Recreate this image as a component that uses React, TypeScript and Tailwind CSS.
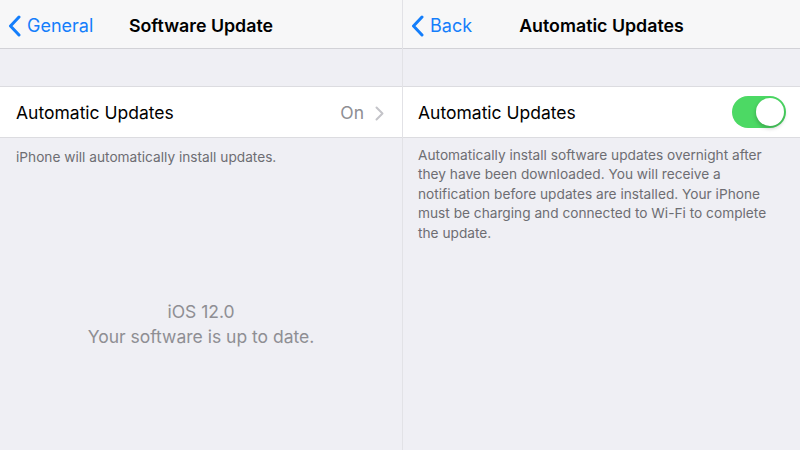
import React from "react";

function BackChevron() {
  return (
    <svg width="13" height="22" viewBox="0 0 13 22" fill="none" className="shrink-0">
      <path d="M11 2 L2.5 11 L11 20" stroke="#147efb" strokeWidth="3" strokeLinecap="round" strokeLinejoin="round" />
    </svg>
  );
}

function NavBar({ back, title }: { back: string; title: string }) {
  return (
    <div className="relative flex h-[49px] items-center border-b border-[#d2d2d7] bg-[#f7f7f8] pt-[3px]">
      <div className="flex items-center gap-[6px] pl-[8px] text-[18px] text-[#147efb]">
        <BackChevron />
        <span>{back}</span>
      </div>
      <div className="pointer-events-none absolute inset-x-0 top-0 flex h-full items-center justify-center pt-[5px]">
        <span className="text-[17.8px] font-semibold text-black">{title}</span>
      </div>
    </div>
  );
}

function Toggle() {
  return (
    <div className="flex h-[32px] w-[54px] items-center justify-end rounded-full bg-[#4cd964] p-[2px]">
      <div className="h-[28px] w-[28px] rounded-full bg-white shadow-[0_2px_4px_rgba(0,0,0,0.25)]" />
    </div>
  );
}

function SoftwareUpdate() {
  return (
    <div className="flex h-full flex-col">
      <NavBar back="General" title="Software Update" />
      <div className="mt-[37px] flex h-[52px] items-center border-y border-[#dcdce0] bg-white pl-[16px] pr-[18px] pt-[3px]">
        <span className="flex-1 text-[17.5px] text-black">Automatic Updates</span>
        <span className="text-[17.5px] text-[#8e8e93]">On</span>
        <svg width="9" height="15" viewBox="0 0 9 15" fill="none" className="ml-[11px]">
          <path d="M1.5 1.5 L7.5 7.5 L1.5 13.5" stroke="#c4c4c9" strokeWidth="2" strokeLinecap="round" strokeLinejoin="round" />
        </svg>
      </div>
      <p className="mt-[9px] pl-[16px] text-[13.7px] text-[#6d6d72]">iPhone will automatically install updates.</p>
      <div className="mt-[131px] flex flex-col items-center text-[17.5px] leading-[25px] text-[#8e8e93]">
        <span>iOS 12.0</span>
        <span>Your software is up to date.</span>
      </div>
    </div>
  );
}

function AutomaticUpdates() {
  return (
    <div className="flex h-full flex-col">
      <NavBar back="Back" title="Automatic Updates" />
      <div className="mt-[37px] flex h-[52px] items-center border-y border-[#dcdce0] bg-white pl-[15px] pr-[14px]">
        <span className="flex-1 pt-[3px] text-[17.5px] text-black">Automatic Updates</span>
        <Toggle />
      </div>
      <p className="mt-[8px] px-[15px] text-[13.7px] leading-[19.4px] text-[#6d6d72]">
        Automatically install software updates overnight after they have been downloaded. You will receive a
        notification before updates are installed. Your iPhone must be charging and connected to Wi-Fi to complete
        the update.
      </p>
    </div>
  );
}

export default function App() {
  return (
    <div className="flex h-[450px] w-[800px] bg-[#efeff4] font-['Inter','Noto_Sans',sans-serif]">
      <div className="h-full w-[403px] border-r border-[#e2e2e6]">
        <SoftwareUpdate />
      </div>
      <div className="h-full flex-1">
        <AutomaticUpdates />
      </div>
    </div>
  );
}
